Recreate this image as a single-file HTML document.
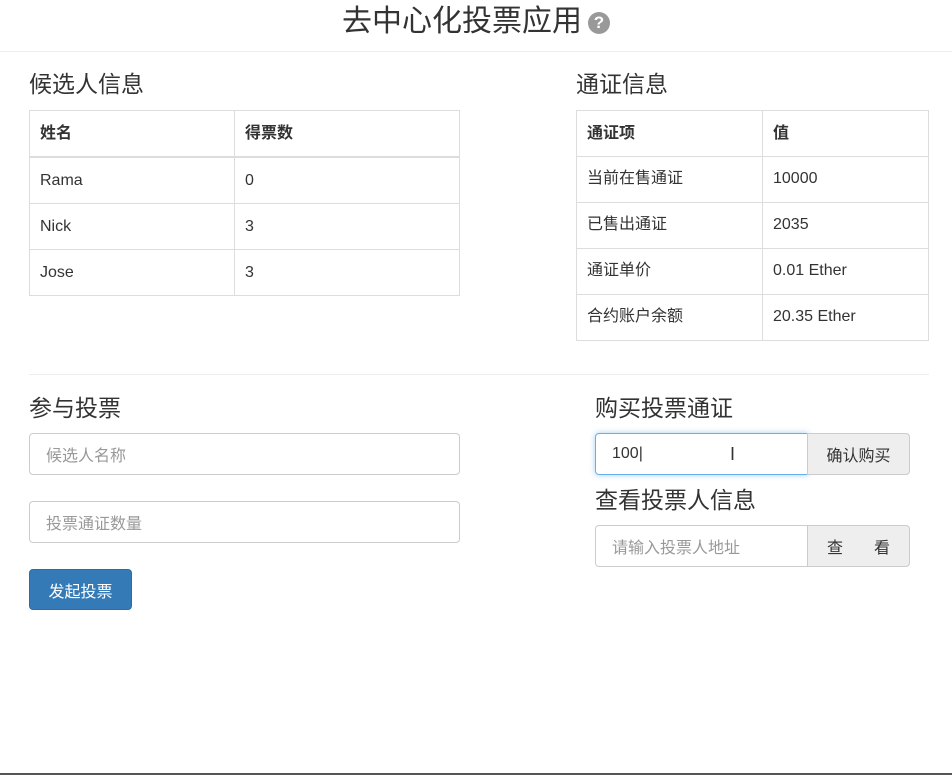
<!DOCTYPE html><html><head><meta charset="utf-8"><style>
body{margin:0;width:952px;height:775px;position:relative;background:#fff;font-family:"Liberation Sans","Noto Sans CJK SC",sans-serif;color:#333;font-size:16px;overflow:hidden}
.a{position:absolute}
h1{position:absolute;margin:0;font-weight:normal;font-size:30px;left:0;width:952px;text-align:center;top:3px;line-height:38px;color:#333}
.q{display:inline-block;width:22px;height:22px;border-radius:50%;background:#999;color:#fff;font-size:17px;line-height:22px;text-align:center;font-weight:bold;vertical-align:3px;margin-left:6px}
h3{position:absolute;margin:0;font-weight:normal;font-size:23px;line-height:30px}
table{position:absolute;border-collapse:collapse;font-size:16px}
td,th{border:1px solid #ddd;padding:0 10px;text-align:left;height:45px;vertical-align:middle;line-height:20px}
td span,th span{display:inline-block;vertical-align:middle}
th{border-bottom:2px solid #ddd}
.in{position:absolute;border:1px solid #ccc;border-radius:4px;box-sizing:border-box;padding-left:16px;color:#999;font-size:16px;display:flex;align-items:center}
.btn{position:absolute;box-sizing:border-box;border:1px solid #ccc;background:#eee;border-radius:0 4px 4px 0;display:flex;align-items:center;justify-content:center;font-size:16px;color:#333}
</style></head><body>
<h1>去中心化投票应用<span class="q">?</span></h1>
<div class="a" style="left:0;top:51px;width:952px;height:1px;background:#eee"></div>
<h3 style="left:29px;top:69px">候选人信息</h3>
<h3 style="left:576px;top:69px">通证信息</h3>
<table style="left:29px;top:110px;width:431px"><tr><th style="width:184px">姓名</th><th>得票数</th></tr><tr><td>Rama</td><td>0</td></tr><tr><td>Nick</td><td>3</td></tr><tr><td>Jose</td><td>3</td></tr></table>
<table style="left:576px;top:110px;width:353px"><tr><th style="width:165px;border-bottom-width:1px">通证项</th><th style="border-bottom-width:1px">值</th></tr><tr><td><span>当前在售通证</span></td><td><span>10000</span></td></tr><tr><td><span>已售出通证</span></td><td><span>2035</span></td></tr><tr><td><span>通证单价</span></td><td><span>0.01 Ether</span></td></tr><tr><td><span>合约账户余额</span></td><td><span>20.35 Ether</span></td></tr></table>
<div class="a" style="left:29px;top:374px;width:900px;height:1px;background:#eee"></div>
<h3 style="left:29px;top:393px">参与投票</h3>
<div class="in" style="left:29px;top:433px;width:431px;height:42px">候选人名称</div>
<div class="in" style="left:29px;top:501px;width:431px;height:42px">投票通证数量</div>
<div class="a" style="left:29px;top:569px;width:103px;height:41px;background:#337ab7;border:1px solid #2e6da4;box-sizing:border-box;border-radius:4px;color:#fff;display:flex;align-items:center;justify-content:center">发起投票</div>
<h3 style="left:595px;top:393px">购买投票通证</h3>
<div class="in" style="left:595px;top:433px;width:213px;height:42px;border-color:#66afe9;box-shadow:0 0 6px rgba(102,175,233,.6);border-radius:4px 0 0 4px;color:#333">100|<span style="position:absolute;left:134px;top:10px;font-size:18px">I</span></div>
<div class="btn" style="left:807px;top:433px;width:103px;height:42px">确认购买</div>
<h3 style="left:595px;top:485px">查看投票人信息</h3>
<div class="in" style="left:595px;top:525px;width:213px;height:42px;border-radius:4px 0 0 4px">请输入投票人地址</div>
<div class="btn" style="left:807px;top:525px;width:103px;height:42px;word-spacing:0">查&nbsp;&nbsp;&nbsp;&nbsp;&nbsp;&nbsp;&nbsp;看</div>
<div class="a" style="left:0;top:773px;width:952px;height:2px;background:#555"></div>
</body></html>
